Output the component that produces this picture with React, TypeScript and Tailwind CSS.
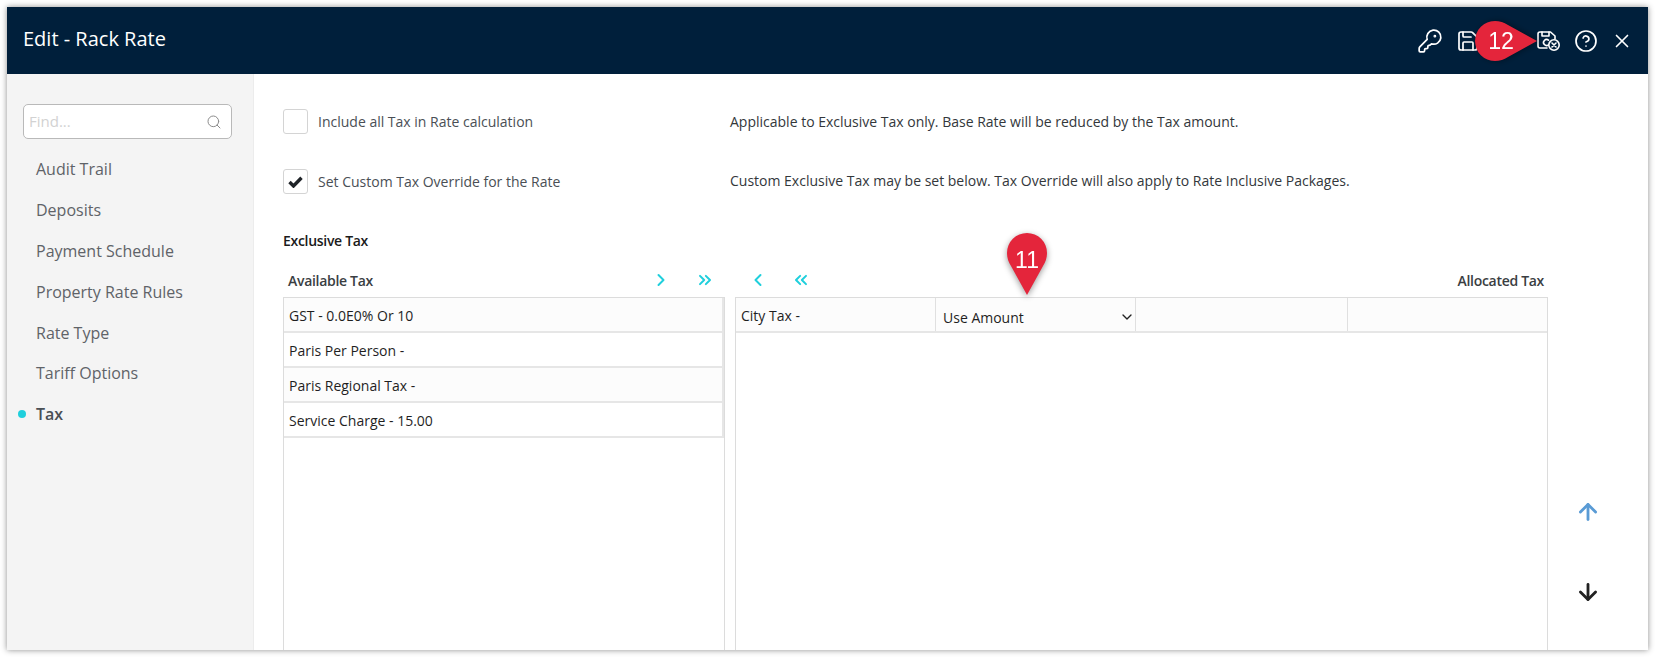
import { ChevronLeft, ChevronRight, ChevronsLeft, ChevronsRight, ChevronDown, CircleHelp, KeyRound, Save, Search, X, ArrowUp, ArrowDown } from "lucide-react";

const sideItems = ["Audit Trail", "Deposits", "Payment Schedule", "Property Rate Rules", "Rate Type", "Tariff Options", "Tax"];
const available = ["GST - 0.0E0% Or 10", "Paris Per Person -", "Paris Regional Tax -", "Service Charge - 15.00"];

function SaveClose() {
  return (
    <svg width="26" height="24" viewBox="0 0 26 24" fill="none" stroke="currentColor" strokeWidth="1.6" strokeLinecap="round" strokeLinejoin="round">
      <path d="M12 19H5a2 2 0 0 1-2-2V5a2 2 0 0 1 2-2h10.5L20 7v3" />
      <path d="M7 3v4h7V3" />
      <path d="M13.5 11.2a3 3 0 1 0 0 4.6" />
      <circle cx="19" cy="16" r="5.2" fill="#001f3b" />
      <path d="M17 14l4 4M21 14l-4 4" />
    </svg>
  );
}

function Pin({ label, rotate }: { label: string; rotate?: boolean }) {
  return (
    <svg width="40" height="62" viewBox="0 0 40 62" className={rotate ? "-rotate-90 drop-shadow-[0_2px_3px_rgba(0,0,0,0.4)]" : "drop-shadow-[0_2px_3px_rgba(0,0,0,0.4)]"}>
      <path d="M20 0a20 20 0 0 1 20 20c0 5-1.500 9-4 13L20 62 4 33C1.500 29 0 25 0 20A20 20 0 0 1 20 0z" fill="#e4253b" />
      <text x={rotate ? 26 : 20} y={rotate ? 28 : 35} textAnchor="middle" fill="#fff" fontSize="23" fontFamily="Liberation Sans, sans-serif" transform={rotate ? "rotate(90 20 20)" : undefined}>
        {label}
      </text>
    </svg>
  );
}

function Checkbox({ checked, label, hint }: { checked?: boolean; label: string; hint: string }) {
  return (
    <div className="flex h-[25px] items-center text-[14px] text-[#4a4f55]">
      <div className="flex h-[25px] w-[25px] items-center justify-center rounded-[3px] border border-[#d4d4d4] bg-white">
        {checked && (
          <svg width="15" height="12" viewBox="0 0 15 12" fill="none" stroke="#1f2328" strokeWidth="3.4">
            <path d="M1.500 6l4 4L13.500 1.800" />
          </svg>
        )}
      </div>
      <span className="ml-[10px] w-[412px]">{label}</span>
      <span className={checked ? "pb-[2px] text-[#33373b]" : "text-[#33373b]"}>{hint}</span>
    </div>
  );
}

export default function App() {
  return (
    <div className="h-[658px] w-[1656px] overflow-hidden bg-white pl-[7px] pt-[7px] font-['Open_Sans',sans-serif]">
      <div className="relative flex h-[643px] w-[1641px] flex-col bg-white shadow-[0_0_6px_rgba(0,0,0,0.45)]">
        {/* Header */}
        <div className="flex h-[67px] shrink-0 items-center bg-[#001f3b] pl-[16px] pr-[15px] text-white">
          <h1 className="pb-[3px] text-[20px]">Edit - Rack Rate</h1>
          <div className="ml-auto flex items-center">
            <KeyRound size={26} strokeWidth={1.6} />
            <Save size={24} strokeWidth={1.7} className="ml-[13px]" />
            <div className="ml-[55px]"><SaveClose /></div>
            <CircleHelp size={24} strokeWidth={1.7} className="ml-[13px]" />
            <X size={22} strokeWidth={1.8} className="ml-[13px]" />
          </div>
        </div>

        <div className="flex min-h-0 flex-1">
          {/* Sidebar */}
          <div className="w-[247px] shrink-0 border-r border-[#ececec] bg-[#f4f4f4] pl-[16px] pt-[30px]">
            <div className="flex h-[35px] w-[209px] items-center justify-between rounded-[5px] border border-[#b9b9b9] bg-white pl-[5px] pr-[9px]">
              <span className="text-[15px] text-[#d2d2d2]">Find...</span>
              <Search size={16} strokeWidth={1.5} className="text-[#8b8b8b]" />
            </div>
            <ul className="mt-[10px]">
              {sideItems.map((item) => (
                <li key={item} className={`relative flex h-[40.8px] items-center pl-[13px] text-[16px] ${item === "Tax" ? "font-semibold text-[#4a4f55]" : "text-[#5f6368]"}`}>
                  {item === "Tax" && <span className="absolute left-[-5px] h-[8px] w-[8px] rounded-full bg-[#1fcfdc]" />}
                  {item}
                </li>
              ))}
            </ul>
          </div>

          {/* Main */}
          <div className="min-w-0 flex-1 pl-[29px] pt-[35px]">
            <div className="flex flex-col gap-[35px]">
              <Checkbox label="Include all Tax in Rate calculation" hint="Applicable to Exclusive Tax only. Base Rate will be reduced by the Tax amount." />
              <Checkbox checked label="Set Custom Tax Override for the Rate" hint="Custom Exclusive Tax may be set below. Tax Override will also apply to Rate Inclusive Packages." />
            </div>
            <div className="mt-[37px] h-[20px] text-[14px] font-semibold leading-[20px] tracking-[-0.3px] text-[#1b1b1b]">Exclusive Tax</div>

            <div className="mt-[17px] flex h-[24px] items-center text-[14px] font-semibold tracking-[-0.3px] text-[#3a3e42]">
              <div className="flex w-[452px] shrink-0 items-center pl-[5px]">
                <span>Available Tax</span>
                <ChevronRight size={20} strokeWidth={2.4} className="ml-[278px] text-[#1fcfdc]" />
                <ChevronsRight size={20} strokeWidth={2.4} className="ml-[24px] text-[#1fcfdc]" />
              </div>
              <div className="flex w-[813px] shrink-0 items-center pl-[13px] pr-[4px]">
                <ChevronLeft size={20} strokeWidth={2.4} className="text-[#1fcfdc]" />
                <ChevronsLeft size={20} strokeWidth={2.4} className="ml-[23px] text-[#1fcfdc]" />
                <span className="ml-auto">Allocated Tax</span>
              </div>
            </div>

            <div className="mt-[5px] flex h-[353px] items-stretch">
              <div className="w-[442px] shrink-0 border border-b-0 border-[#dcdcdc]">
                {available.map((row, i) => (
                  <div key={row} className={`flex h-[35px] items-center border-b-2 border-r-2 border-[#e6e6e6] pl-[5px] pt-[2px] text-[14px] text-[#1f1f1f] ${i % 2 === 0 ? "bg-[#fcfcfc]" : "bg-white"}`}>
                    {row}
                  </div>
                ))}
              </div>
              <div className="ml-[10px] w-[813px] shrink-0 border border-b-0 border-[#dcdcdc]">
                <div className="flex h-[35px] border-b-2 border-[#e6e6e6] bg-[#fcfcfc] text-[14px] text-[#1f1f1f]">
                  <div className="flex w-[199px] items-center pl-[5px] pt-[2px]">City Tax -</div>
                  <div className="flex w-[200px] items-center border-l border-[#e0e0e0] pl-[7px] pt-[5px]">
                    <span>Use Amount</span>
                    <ChevronDown size={16} strokeWidth={2} className="ml-auto text-[#222]" />
                  </div>
                  <div className="w-[212px] border-l border-[#e0e0e0]" />
                  <div className="flex-1 border-l border-[#e0e0e0]" />
                </div>
              </div>
              <div className="flex flex-1 flex-col items-center pr-[21px] pt-[202px]">
                <ArrowUp size={26} strokeWidth={2.6} className="text-[#5a9bd5]" />
                <ArrowDown size={26} strokeWidth={2.6} className="mt-[54px] text-[#222]" />
              </div>
            </div>
          </div>
        </div>

        {/* Callouts */}
        <div className="absolute left-[1000px] top-[226px]">
          <Pin label="11" />
        </div>
        <div className="absolute left-[1479px] top-[3px]">
          <Pin label="12" rotate />
        </div>
      </div>
    </div>
  );
}
